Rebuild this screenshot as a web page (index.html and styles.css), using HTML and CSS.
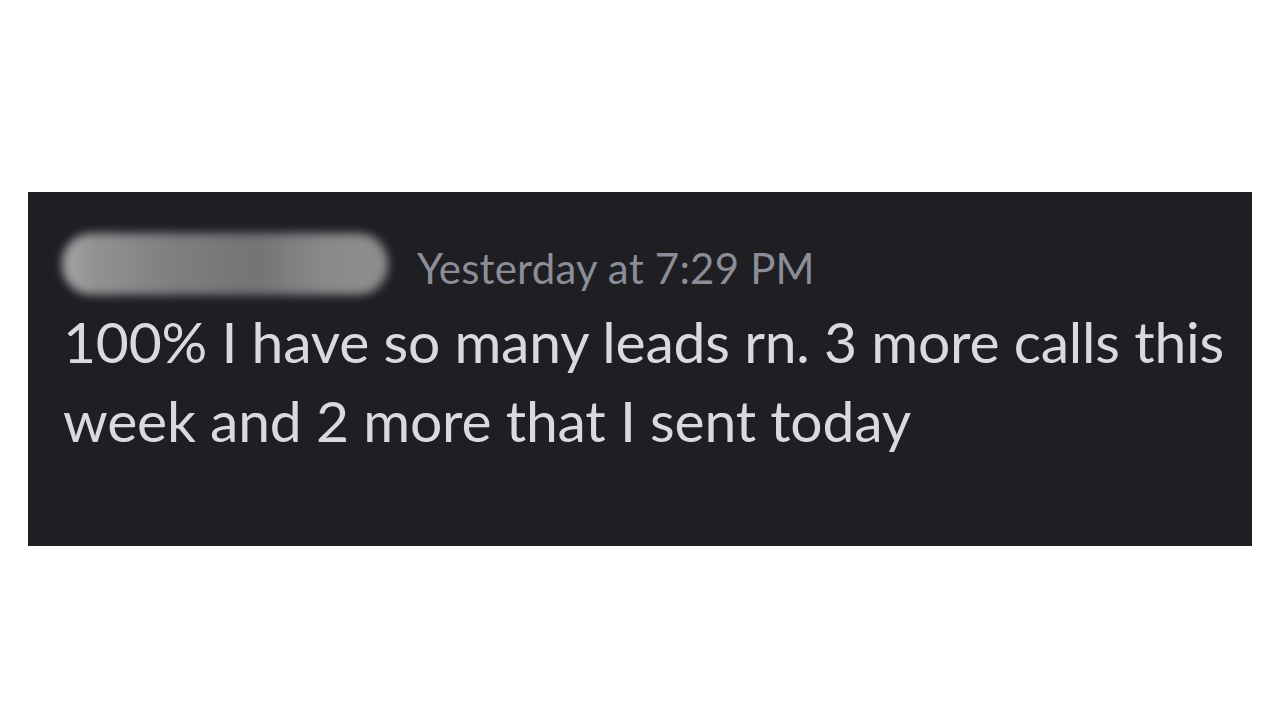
FILE: index.html
```html
<!DOCTYPE html>
<html>
<head>
<meta charset="utf-8">
<link rel="stylesheet" href="styles.css">
</head>
<body>
<div class="page">
  <div class="card">
    <div class="header">
      <div class="name-blur"><div class="blob"></div></div>
      <span class="time">Yesterday at 7:29 PM</span>
    </div>
    <p class="message">100% I have so many leads rn. 3 more calls this week and 2 more that I sent today</p>
  </div>
</div>
</body>
</html>
```
FILE: styles.css
```css
html, body {
  margin: 0;
  padding: 0;
  background: #ffffff;
}
.page {
  width: 1280px;
  height: 720px;
  padding-top: 192px;
  padding-left: 28px;
  box-sizing: border-box;
}
.card {
  width: 1224px;
  height: 354px;
  background: #1e1e23;
  box-sizing: border-box;
  padding: 34px 20px 0 28px;
  font-family: "Lato", "Noto Sans", sans-serif;
}
.header {
  display: flex;
  align-items: center;
  gap: 23px;
  height: 76px;
}
.name-blur {
  width: 338px;
  height: 76px;
  display: flex;
  align-items: center;
  justify-content: center;
}
.blob {
  width: 326px;
  height: 62px;
  border-radius: 30px;
  background: linear-gradient(90deg, #a6a6a8 0%, #929294 10%, #7e7e81 35%, #747477 60%, #89898b 80%, #8e8e90 100%);
  filter: blur(5px);
}
.time {
  color: #8b8d97;
  font-size: 42px;
  letter-spacing: 0.2px;
  line-height: 1;
  margin-top: 8px;
}
.message {
  margin: 0;
  color: #d9dadf;
  font-size: 57px;
  font-weight: 400;
  letter-spacing: -0.2px;
  line-height: 79px;
  width: 1180px;
  margin-left: 7px;
}
```
